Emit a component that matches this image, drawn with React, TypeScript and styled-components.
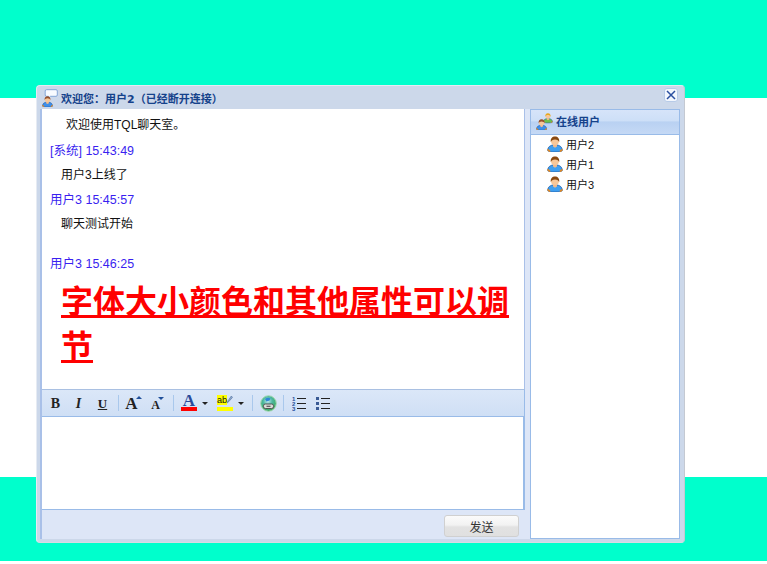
import styled, {createGlobalStyle} from "styled-components";

const GlobalStyle = createGlobalStyle`
  html, body {
    margin: 0;
    padding: 0;
    background: #fff;
  }
  body {
    font-family: "Liberation Sans", "Noto Sans CJK SC", sans-serif;
    font-size: 12px;
  }
`;

const Page = styled.div`
  position: relative;
  width: 767px;
  height: 564px;
  overflow: hidden;
  background: #fff;
`;

const Band = styled.div<{$height: number; $color: string}>`
  height: ${(p) => p.$height}px;
  background: ${(p) => p.$color};
`;

const Window = styled.div`
  position: absolute;
  left: 36px;
  top: 85px;
  width: 649px;
  height: 458px;
  box-sizing: border-box;
  display: flex;
  flex-direction: column;
  background: #ccd8ea;
  border: 1px solid #e6ebf3;
  border-right-color: #c4c9d2;
  border-bottom-color: #d8dce2;
  border-radius: 4px;
  padding: 0 4px 3px 3px;
`;

const TitleBar = styled.div`
  height: 23px;
  display: flex;
  align-items: center;
  gap: 3px;
  flex-shrink: 0;
`;

const TitleText = styled.span`
  flex: 1;
  font-family: "DejaVu Sans", "Noto Sans CJK SC", sans-serif;
  font-size: 11px;
  font-weight: bold;
  color: #15428b;
`;

const CloseButton = styled.button`
  width: 14px;
  height: 14px;
  padding: 0;
  margin: 0 2px 5px 0;
  display: flex;
  align-items: center;
  justify-content: center;
  background: #f3f7fd;
  border: 1px solid #b7cbe8;
  border-radius: 3px;
`;

const Body = styled.div`
  flex: 1;
  display: flex;
  gap: 5px;
  min-height: 0;
  background: #dde6f7;
`;

const LeftColumn = styled.div`
  width: 485px;
  display: flex;
  flex-direction: column;
  border-left: 2px solid #a9c0e8;
  box-sizing: border-box;
`;

const ChatLog = styled.div`
  height: 280px;
  box-sizing: border-box;
  background: #fff;
  border-right: 1px solid #a9c0e8;
  overflow: hidden;
  padding-top: 8px;
`;

const Welcome = styled.p`
  margin: 0 0 9px 24px;
  height: 17px;
  line-height: 17px;
  color: #111;
`;

const Stamp = styled.div`
  height: 17px;
  line-height: 17px;
  margin: 0 0 7px 8px;
  color: #3a1ff0;
  font-size: 12.5px;
`;

const Message = styled.p<{$gap: number}>`
  margin: 0 0 ${(p) => p.$gap}px 19px;
  height: 17px;
  line-height: 17px;
  color: #111;
`;

const BigMessage = styled.p`
  margin: 0 8px 0 19px;
  color: #ff0000;
  font-size: 32px;
  font-weight: bold;
  line-height: 45px;
  text-decoration: underline;
`;

const Toolbar = styled.div`
  height: 28px;
  box-sizing: border-box;
  display: flex;
  align-items: center;
  padding-left: 2px;
  background: linear-gradient(#dbe7f8, #cfdff5);
  border-top: 1px solid #a9c0e2;
  border-bottom: 1px solid #99bbe8;
  border-right: 1px solid #99bbe8;
`;

const ToolButton = styled.div<{$width?: number}>`
  width: ${(p) => p.$width ?? 23}px;
  height: 20px;
  flex-shrink: 0;
  display: flex;
  align-items: center;
  justify-content: center;
`;

const ToolSeparator = styled.div`
  width: 1px;
  height: 16px;
  flex-shrink: 0;
  background: #a9c8ec;
  margin: 0 3px;
`;

const Editor = styled.div`
  height: 93px;
  background: #fff;
  border-right: 2px solid #99bbe8;
  border-bottom: 1px solid #99bbe8;
  box-sizing: border-box;
`;

const Footer = styled.div`
  flex: 1;
  display: flex;
  align-items: flex-start;
  justify-content: flex-end;
  padding: 5px 6px 0 0;
`;

const SendButton = styled.button`
  width: 75px;
  height: 22px;
  padding: 0;
  font-family: inherit;
  font-size: 12px;
  color: #333;
  background: linear-gradient(#fbfbfb 0%, #f2f2f2 45%, #e2e2e2 55%, #e0e0e0 100%);
  border: 1px solid #d0d0d0;
  border-radius: 3px;
`;

const UserPanel = styled.aside`
  width: 150px;
  display: flex;
  flex-direction: column;
  background: #fff;
  border: 1px solid #99bbe8;
  box-sizing: border-box;
`;

const PanelHead = styled.div`
  height: 25px;
  flex-shrink: 0;
  box-sizing: border-box;
  display: flex;
  align-items: center;
  gap: 3px;
  padding: 0 0 2px 5px;
  background: linear-gradient(#d6e4f9 0%, #cddff7 45%, #b9d1f2 50%, #c5d9f5 100%);
  border-bottom: 1px solid #99bbe8;
  font-size: 11px;
  font-weight: bold;
  color: #15428b;
`;

const UserList = styled.ul`
  list-style: none;
  margin: 0;
  padding: 0 0 0 16px;
`;

const UserRow = styled.li`
  height: 20px;
  box-sizing: border-box;
  padding-bottom: 2px;
  display: flex;
  align-items: center;
  gap: 3px;
  font-size: 11px;
  color: #111;
`;

function Person({shirt = "#3f9ff0", hair = "#8a4a12"}: {shirt?: string; hair?: string}) {
  return (
    <>
      <path d="M.8 14.800c-.3-3.600 2.200-6 7.200-6s7.500 2.400 7.200 6c-1.200 1-3.600 1.200-7.200 1.200s-6-.2-7.200-1.200z" fill={shirt} stroke="#1f5aa6" strokeWidth=".8"/>
      <path d="M.6 13.400l2.400 2.200M15.400 13.400l-2.400 2.200" stroke="#e8871a" strokeWidth="1.500"/>
      <path d="M6 8.500h4v2l-2 1.200-2-1.200z" fill="#f2b98a"/>
      <circle cx="8" cy="5.200" r="3.900" fill="#f6c79a"/>
      <path d="M3.800 6C3.300 2.200 5.300.4 8 .4s4.700 1.800 4.200 5.600c-.7-1.600-1.900-2.600-4.200-2.600S4.500 4.400 3.800 6z" fill={hair}/>
    </>
  );
}

function UserIcon() {
  return (
    <svg width="16" height="16" viewBox="0 0 16 16"><Person/></svg>
  );
}

function GroupIcon() {
  return (
    <svg width="17" height="17" viewBox="0 0 17 17">
      <g transform="translate(7 0) scale(.62)"><Person shirt="#6cc04a" hair="#e6a81e"/></g>
      <g transform="translate(0 6) scale(.7)"><Person shirt="#3f8fe8" hair="#96502a"/></g>
    </svg>
  );
}

function ChatUserIcon() {
  return (
    <svg width="18" height="18" viewBox="0 0 18 18">
      <path d="M6.500.7h9.500a1.300 1.300 0 0 1 1.300 1.300v4a1.300 1.300 0 0 1-1.300 1.300h-5.500L8.500 9.200V7.300h-2a1.300 1.300 0 0 1-1.300-1.300V2a1.300 1.300 0 0 1 1.300-1.300z" fill="#f8fbff" stroke="#7c9fd4" strokeWidth=".9"/>
      <g transform="translate(2 7) scale(.69)"><Person shirt="#3f8fe8" hair="#96502a"/></g>
    </svg>
  );
}

function CloseIcon() {
  return (
    <svg width="10" height="10" viewBox="0 0 10 10">
      <path d="M1 1l8 8M9 1l-8 8" stroke="#2a4fa0" strokeWidth="1.500"/>
    </svg>
  );
}

const Glyph = styled.span<{$size: number; $italic?: boolean; $under?: boolean; $drop?: number}>`
  font-family: "Liberation Serif", serif;
  font-weight: bold;
  font-size: ${(p) => p.$size}px;
  font-style: ${(p) => (p.$italic ? "italic" : "normal")};
  text-decoration: ${(p) => (p.$under ? "underline" : "none")};
  margin-top: ${(p) => p.$drop ?? 0}px;
  color: #222;
  line-height: 1;
`;

const Swatch = styled.span<{$color: string}>`
  display: flex;
  flex-direction: column;
  align-items: center;
  width: 16px;
  &::after {
    content: "";
    display: block;
    width: 16px;
    height: 4px;
    background: ${(p) => p.$color};
  }
`;

const ColorLetter = styled.span`
  font-family: "Liberation Serif", serif;
  font-weight: bold;
  font-size: 17px;
  height: 12px;
  line-height: 12px;
  color: #2a4a9a;
`;

const HighlightRow = styled.span`
  display: flex;
  align-items: flex-start;
  height: 12px;
  width: 16px;
`;

const HighlightLetters = styled.span`
  font-size: 9px;
  line-height: 10px;
  width: 10px;
  height: 10px;
  background: #ffff00;
  color: #111;
`;

function Caret({up}: {up?: boolean}) {
  return (
    <svg width="7" height="20" viewBox="0 0 7 20" style={{marginLeft: -2, flexShrink: 0}}>
      {up ? <path d="M0 6l3-3 3 3z" fill="#1f4f9a"/> : <path d="M0 4h6l-3 3z" fill="#1f4f9a"/>}
    </svg>
  );
}

function Dropdown() {
  return (
    <svg width="7" height="5" viewBox="0 0 7 5" style={{marginLeft: 5}}>
      <path d="M0 1h6l-3 3z" fill="#222"/>
    </svg>
  );
}

function PencilIcon() {
  return (
    <svg width="6" height="9" viewBox="0 0 7 9">
      <path d="M5 .5l1.500 1.500L2 7 .3 8.500 1 6.300z" fill="#8fa9cc" stroke="#4f6f9e" strokeWidth=".7"/>
    </svg>
  );
}

function LinkIcon() {
  return (
    <svg width="17" height="17" viewBox="0 0 17 17">
      <defs>
        <radialGradient id="globe" cx="45%" cy="35%" r="65%">
          <stop offset="0" stopColor="#bfe8f0"/>
          <stop offset=".45" stopColor="#4cb8a0"/>
          <stop offset="1" stopColor="#3aa85a"/>
        </radialGradient>
      </defs>
      <circle cx="8.500" cy="8.500" r="7.800" fill="url(#globe)" stroke="#a6d8b4" strokeWidth="1"/>
      <path d="M5 4c2-1.500 4-1.500 5.500-.5l-1 2-3 1z" fill="#2f86d8"/>
      <rect x="3.500" y="9" width="10" height="4.500" rx="1.800" fill="#d9dcd9" stroke="#555" strokeWidth="1"/>
      <path d="M6.500 11.300h4" stroke="#555" strokeWidth="1.200"/>
    </svg>
  );
}

function ListLines() {
  return <path d="M5 3.500h9M5 8.500h9M5 13.500h9" stroke="#222" strokeWidth="1"/>;
}

function OrderedIcon() {
  return (
    <svg width="14" height="16" viewBox="0 0 14 16">
      <ListLines/>
      <text x="0" y="5.500" fontSize="6" fontWeight="bold" fill="#1f4f9a" fontFamily="Liberation Sans">1</text>
      <text x="0" y="10.500" fontSize="6" fontWeight="bold" fill="#1f4f9a" fontFamily="Liberation Sans">2</text>
      <text x="0" y="15.500" fontSize="6" fontWeight="bold" fill="#1f4f9a" fontFamily="Liberation Sans">3</text>
    </svg>
  );
}

function BulletIcon() {
  return (
    <svg width="14" height="16" viewBox="0 0 14 16">
      <ListLines/>
      <path d="M0 2h3v3H0zM0 7h3v3H0zM0 12h3v3H0z" fill="#3a5a94"/>
    </svg>
  );
}

const onlineUsers = ["用户2", "用户1", "用户3"];

export default function App() {
  return (
    <Page>
      <GlobalStyle/>
      <Band $height={98} $color="#00ffcc"/>
      <Band $height={379} $color="#fff"/>
      <Band $height={84} $color="#00ffcc"/>
      <Window>
        <TitleBar>
          <ChatUserIcon/>
          <TitleText>欢迎您：用户2（已经断开连接）</TitleText>
          <CloseButton aria-label="关闭"><CloseIcon/></CloseButton>
        </TitleBar>
        <Body>
          <LeftColumn>
            <ChatLog>
              <Welcome>欢迎使用TQL聊天室。</Welcome>
              <Stamp>[系统] 15:43:49</Stamp>
              <Message $gap={8}>用户3上线了</Message>
              <Stamp>用户3 15:45:57</Stamp>
              <Message $gap={23}>聊天测试开始</Message>
              <Stamp>用户3 15:46:25</Stamp>
              <BigMessage>字体大小颜色和其他属性可以调节</BigMessage>
            </ChatLog>
            <Toolbar>
              <ToolButton><Glyph $size={14} $drop={2}>B</Glyph></ToolButton>
              <ToolButton><Glyph $size={14} $italic $drop={2}>I</Glyph></ToolButton>
              <ToolButton $width={25}><Glyph $size={13} $under>U</Glyph></ToolButton>
              <ToolSeparator/>
              <ToolButton $width={24}><Glyph $size={17}>A</Glyph><Caret up/></ToolButton>
              <ToolButton $width={24}><Glyph $size={12} $drop={4}>A</Glyph><Caret/></ToolButton>
              <ToolSeparator/>
              <ToolButton $width={36}><Swatch $color="#ff0000"><ColorLetter>A</ColorLetter></Swatch><Dropdown/></ToolButton>
              <ToolButton $width={36}>
                <Swatch $color="#ffff00">
                  <HighlightRow><HighlightLetters>ab</HighlightLetters><PencilIcon/></HighlightRow>
                </Swatch>
                <Dropdown/>
              </ToolButton>
              <ToolSeparator/>
              <ToolButton $width={24}><LinkIcon/></ToolButton>
              <ToolSeparator/>
              <ToolButton $width={24}><OrderedIcon/></ToolButton>
              <ToolButton $width={24}><BulletIcon/></ToolButton>
            </Toolbar>
            <Editor/>
            <Footer><SendButton>发送</SendButton></Footer>
          </LeftColumn>
          <UserPanel>
            <PanelHead><GroupIcon/>在线用户</PanelHead>
            <UserList>
              {onlineUsers.map((user) => (
                <UserRow key={user}><UserIcon/>{user}</UserRow>
              ))}
            </UserList>
          </UserPanel>
        </Body>
      </Window>
    </Page>
  );
}
